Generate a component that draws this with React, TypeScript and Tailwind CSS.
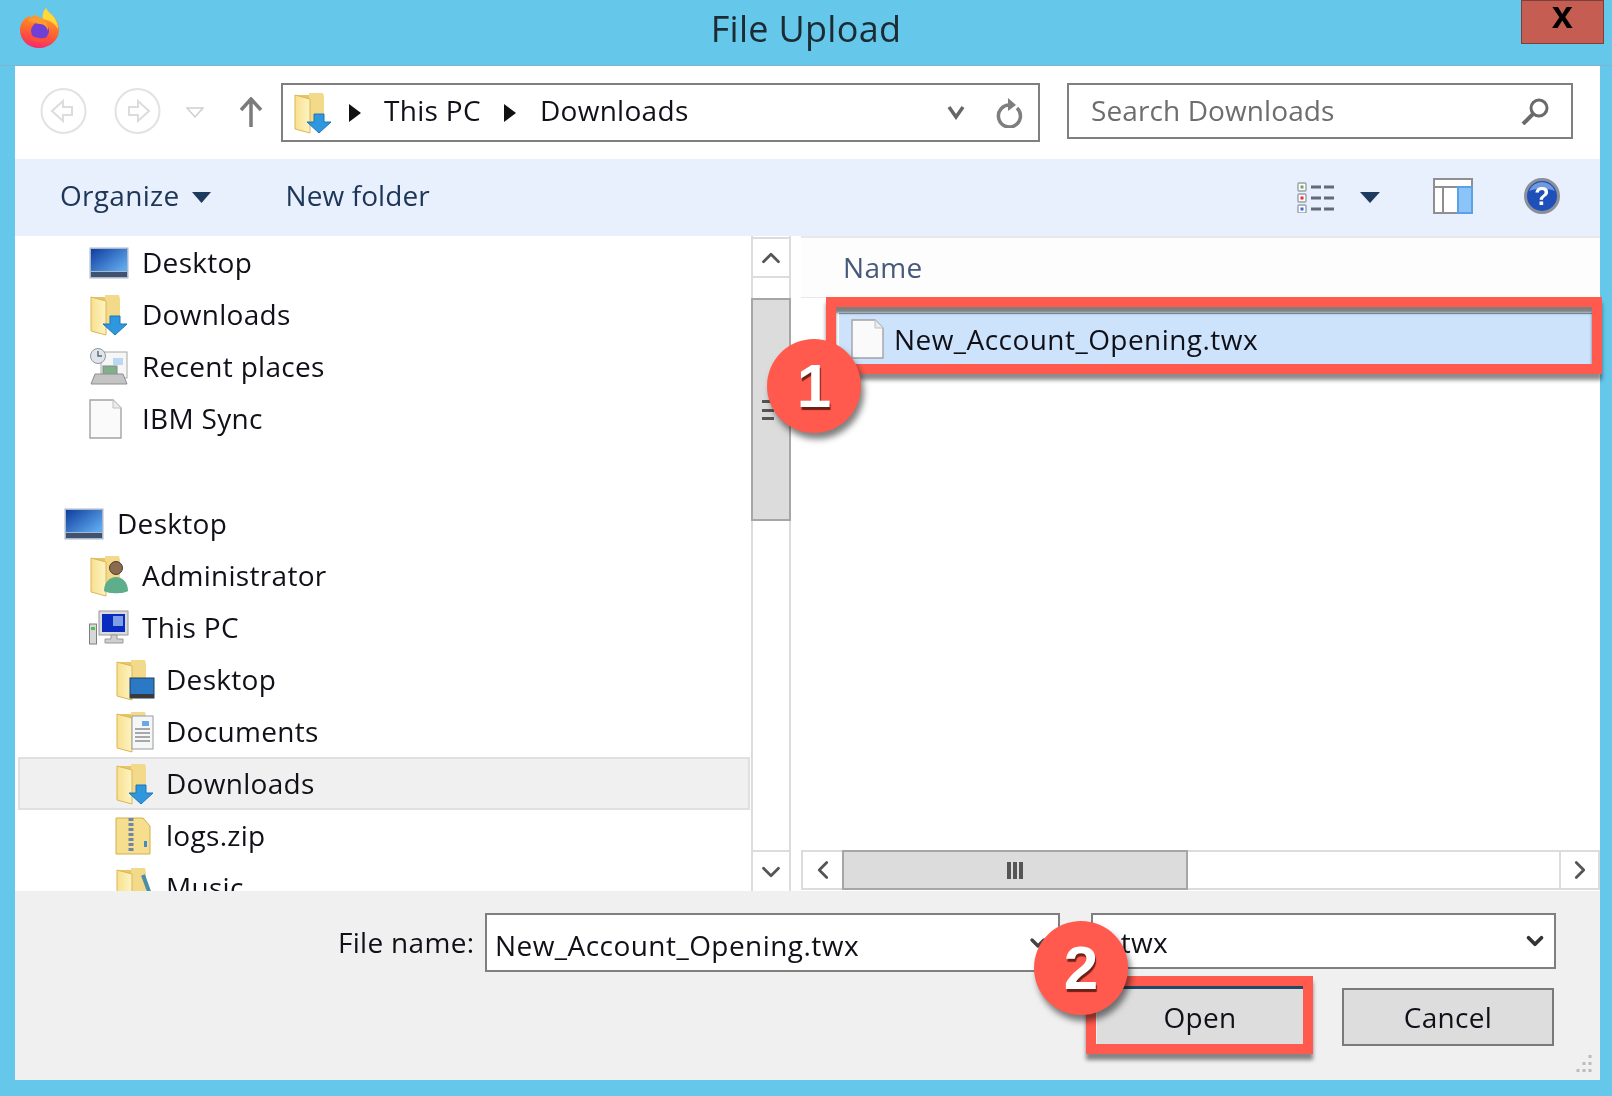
import { ChevronDown, ChevronLeft, ChevronRight, ChevronUp } from 'lucide-react';
import type { ReactNode } from 'react';

function Firefox() {
  return (
    <svg width="41" height="41" viewBox="0 0 41 41">
      <defs>
        <linearGradient id="ffBody" x1="0.6" y1="0" x2="0.4" y2="1">
          <stop offset="0" stopColor="#ffb52e" />
          <stop offset="0.55" stopColor="#ff6a2b" />
          <stop offset="1" stopColor="#f5296b" />
        </linearGradient>
      </defs>
      <path d="M27 1c-3 3-4 7-3 11L16 8c-2 0-3 2-3 3-1-1-2-2-3-2C4 12 1 17 1 23c0 10 8 18 19 18s20-8 20-18c0-6-3-12-7-15-2-2-5-4-6-7z" fill="url(#ffBody)" />
      <path d="M27 1c-3 3-4 7-3 11 6 1 12 4 15 10 0-6-3-11-6-14-2-2-5-4-6-7z" fill="#ffd93c" />
      <circle cx="21" cy="24" r="9" fill="#6f3fd6" />
      <path d="M9 13c4-3 8-3 11-2 6 1 10 6 9 13-1-4-4-7-8-7-3 0-4-1-5-2-2 1-5 0-7-2z" fill="#ff9a2e" />
      <path d="M8 24c1 7 6 11 13 11 5 0 9-3 11-7-3 2-7 4-12 3-6-1-10-3-12-7z" fill="#ff4f38" />
    </svg>
  );
}

function Folder({ children }: { children?: ReactNode }) {
  return (
    <svg width="40" height="42" viewBox="0 0 40 42">
      <defs>
        <linearGradient id="folderFill" x1="0" y1="0" x2="1" y2="0">
          <stop offset="0" stopColor="#f8e08e" />
          <stop offset="1" stopColor="#fdf3c4" />
        </linearGradient>
      </defs>
      <path d="M2 3h28v30H2z" fill="#e9c565" />
      <path d="M16 1h14l1 4v28H16z" fill="#f3d98a" />
      <path d="M2 3l15 4v34L2 37z" fill="url(#folderFill)" stroke="#dcb654" strokeWidth="1" />
      {children}
    </svg>
  );
}

function DownArrow() {
  return <path d="M21 22h10v8h7L26 41 14 30h7z" fill="#2f97dd" stroke="#1f74b8" strokeWidth="1" />;
}

function DownloadsIcon() {
  return (
    <Folder>
      <DownArrow />
    </Folder>
  );
}

function DesktopIcon() {
  return (
    <svg width="40" height="32" viewBox="0 0 40 32">
      <defs>
        <linearGradient id="deskFill" x1="0" y1="0" x2="1" y2="0.8">
          <stop offset="0" stopColor="#103d9e" />
          <stop offset="1" stopColor="#5ea9ee" />
        </linearGradient>
      </defs>
      <rect x="0.5" y="0.5" width="39" height="31" fill="#a9b8cb" />
      <rect x="2" y="2" width="36" height="22" fill="url(#deskFill)" />
      <rect x="2" y="25" width="36" height="5" fill="#3f5270" />
    </svg>
  );
}

function RecentIcon() {
  return (
    <svg width="40" height="38" viewBox="0 0 40 38">
      <rect x="12" y="4" width="26" height="26" fill="#f6f6f6" stroke="#a8a8a8" />
      <rect x="24" y="10" width="10" height="7" fill="#bcd7f2" />
      <rect x="14" y="18" width="14" height="9" fill="#7fb08a" stroke="#888" />
      <path d="M6 26h28l4 10H2z" fill="#c4c4c4" stroke="#8e8e8e" />
      <circle cx="9" cy="8" r="7.5" fill="#dfe5ea" stroke="#8b97a2" />
      <path d="M9 3v5h4" fill="none" stroke="#5c6770" strokeWidth="1.4" />
    </svg>
  );
}

function FileIcon() {
  return (
    <svg width="33" height="40" viewBox="0 0 33 40">
      <path d="M1 1h23l8 8v30H1z" fill="#fafafa" stroke="#a3a3a3" strokeWidth="1.4" />
      <path d="M24 1v8h8" fill="#ececec" stroke="#c0c0c0" />
    </svg>
  );
}

function AdminIcon() {
  return (
    <Folder>
      <circle cx="27" cy="13" r="6.5" fill="#8a6a50" stroke="#4c3a2d" />
      <path d="M15 36c0-9 6-14 12-14s12 5 12 14c-4 3-20 3-24 0z" fill="#5fae8b" />
    </Folder>
  );
}

function ThisPcIcon() {
  return (
    <svg width="40" height="36" viewBox="0 0 40 36">
      <rect x="0.5" y="14" width="7" height="20" fill="#d7d7d7" stroke="#7f7f7f" />
      <rect x="2" y="17" width="4" height="3" fill="#4bc24b" />
      <rect x="10" y="1" width="29" height="24" fill="#dadada" stroke="#9a9a9a" />
      <rect x="13" y="4" width="23" height="18" fill="#0a2bc0" />
      <rect x="24" y="6" width="10" height="10" fill="#7d9fe6" />
      <path d="M22 25h6v4h6v4H16v-4h6z" fill="#cfcfcf" stroke="#999" />
    </svg>
  );
}

function DesktopFolderIcon() {
  return (
    <Folder>
      <rect x="15" y="19" width="24" height="20" fill="#2b78c4" stroke="#23415f" />
      <rect x="15" y="35" width="24" height="4" fill="#3a3a3a" />
    </Folder>
  );
}

function DocumentsIcon() {
  return (
    <Folder>
      <rect x="17" y="5" width="21" height="33" fill="#f4f6f8" stroke="#9a9a9a" />
      <rect x="27" y="10" width="7" height="5" fill="#6ca7e8" />
      <path d="M20 18h15M20 22h15M20 26h15M20 30h15" stroke="#8d8d8d" strokeWidth="1.4" />
    </Folder>
  );
}

function ZipIcon() {
  return (
    <svg width="36" height="38" viewBox="0 0 36 38">
      <path d="M1 1h27l7 8v28H1z" fill="#f6de8f" stroke="#d4ad4c" />
      <path d="M16 1v34" stroke="#6f87a5" strokeWidth="5" strokeDasharray="3 2" />
      <rect x="29" y="24" width="3" height="6" fill="#3f8ec9" />
    </svg>
  );
}

function MusicIcon() {
  return (
    <Folder>
      <path d="M28 8l8 22" stroke="#4a8ea5" strokeWidth="4" fill="none" />
    </Folder>
  );
}

function TreeRow({ indent, slot, icon, label, selected }: { indent: string; slot: string; icon: ReactNode; label: string; selected?: boolean }) {
  return (
    <div className={`h-[52px] flex items-center ${indent}`}>
      <div className={`shrink-0 flex items-center ${slot}`}>{icon}</div>
      <span className="text-[28px] leading-none text-[#101018] whitespace-nowrap -translate-y-[1px]">{label}</span>
      {selected && (
        <div className="absolute left-[3px] right-0 -top-[1px] bottom-0 -z-10 bg-[#f0f0f0] border-2 border-[#e0e0e0]" />
      )}
    </div>
  );
}

function Tree() {
  const l0 = 'pl-[49px]';
  const l1 = 'pl-[74px]';
  const l2 = 'pl-[100px]';
  const s0 = 'w-[53px]';
  const s2 = 'w-[51px]';
  return (
    <div className="w-[735px] overflow-hidden pt-[1px]">
      <TreeRow indent={l1} slot={s0} icon={<DesktopIcon />} label="Desktop" />
      <TreeRow indent={l1} slot={s0} icon={<DownloadsIcon />} label="Downloads" />
      <TreeRow indent={l1} slot={s0} icon={<RecentIcon />} label="Recent places" />
      <TreeRow indent={l1} slot={s0} icon={<FileIcon />} label="IBM Sync" />
      <div className="h-[53px]" />
      <TreeRow indent={l0} slot={s0} icon={<DesktopIcon />} label="Desktop" />
      <TreeRow indent={l1} slot={s0} icon={<AdminIcon />} label="Administrator" />
      <TreeRow indent={l1} slot={s0} icon={<ThisPcIcon />} label="This PC" />
      <TreeRow indent={l2} slot={s2} icon={<DesktopFolderIcon />} label="Desktop" />
      <TreeRow indent={l2} slot={s2} icon={<DocumentsIcon />} label="Documents" />
      <div className="relative z-0">
        <TreeRow indent={l2} slot={s2} icon={<DownloadsIcon />} label="Downloads" selected />
      </div>
      <TreeRow indent={l2} slot={s2} icon={<ZipIcon />} label="logs.zip" />
      <TreeRow indent={l2} slot={s2} icon={<MusicIcon />} label="Music" />
    </div>
  );
}

function VerticalScrollbar() {
  return (
    <div className="w-[40px] shrink-0 ml-[1px] flex flex-col border-x-2 border-[#dcdcdc] pt-[1px]">
      <div className="h-[41px] flex items-center justify-center border-y-2 border-[#dcdcdc]">
        <ChevronUp size={30} strokeWidth={2.2} className="text-[#555]" />
      </div>
      <div className="h-[20px]" />
      <div className="h-[223px] -mx-[2px] bg-[#dcdcdc] border-2 border-[#a6a6a6]" />
      <div className="flex-1" />
      <div className="h-[41px] flex items-center justify-center border-t-2 border-[#dcdcdc]">
        <ChevronDown size={30} strokeWidth={2.2} className="text-[#555]" />
      </div>
    </div>
  );
}

function HorizontalScrollbar() {
  return (
    <div className="h-[40px] mb-[1px] flex border-y-2 border-[#dcdcdc]">
      <div className="w-[41px] border-l-2 border-[#dcdcdc] flex items-center justify-center">
        <ChevronLeft size={30} strokeWidth={2.2} className="text-[#555]" />
      </div>
      <div className="w-[346px] -my-[2px] bg-[#dcdcdc] border-2 border-[#a6a6a6] flex items-center justify-center gap-[2px]">
        <div className="w-[4px] h-[17px] bg-[#555]" />
        <div className="w-[4px] h-[17px] bg-[#555]" />
        <div className="w-[4px] h-[17px] bg-[#555]" />
      </div>
      <div className="flex-1" />
      <div className="w-[41px] border-x-2 border-[#dcdcdc] flex items-center justify-center">
        <ChevronRight size={30} strokeWidth={2.2} className="text-[#555]" />
      </div>
    </div>
  );
}

function NavBar() {
  return (
    <div className="h-[93px] bg-white flex items-start pt-[17px] pl-[25px]">
      <svg width="47" height="46" viewBox="0 0 47 46" className="mt-[5px]">
        <circle cx="23.5" cy="23" r="22" fill="#fff" stroke="#e2e2e2" strokeWidth="2" />
        <path d="M32 19v8h-9v6L12 23l11-10v6z" fill="#fff" stroke="#dcdcdc" strokeWidth="2" />
      </svg>
      <svg width="47" height="46" viewBox="0 0 47 46" className="mt-[5px] ml-[27px]">
        <circle cx="23.5" cy="23" r="22" fill="#fff" stroke="#e2e2e2" strokeWidth="2" />
        <path d="M15 19v8h9v6l11-10-11-10v6z" fill="#fff" stroke="#dcdcdc" strokeWidth="2" />
      </svg>
      <svg width="18" height="11" viewBox="0 0 18 11" className="mt-[24px] ml-[25px]">
        <path d="M1 1h16L9 10z" fill="#fff" stroke="#cfcfcf" strokeWidth="1.5" />
      </svg>
      <svg width="24" height="31" viewBox="0 0 24 31" className="mt-[14px] ml-[35px]">
        <path d="M12 30V3M2 13L12 2l10 11" fill="none" stroke="#7b7b7b" strokeWidth="3.5" />
      </svg>
      <div className="w-[759px] h-[59px] ml-[18px] border-2 border-[#7f7f7f] bg-white flex items-center pl-[10px] relative">
        <DownloadsIcon />
        <svg width="12" height="18" viewBox="0 0 12 18" className="ml-[16px]">
          <path d="M0 0l12 9-12 9z" fill="#111" />
        </svg>
        <span className="ml-[23px] text-[28px] leading-none text-[#101018] -translate-y-[3px]">This PC</span>
        <svg width="12" height="18" viewBox="0 0 12 18" className="ml-[23px]">
          <path d="M0 0l12 9-12 9z" fill="#111" />
        </svg>
        <span className="ml-[24px] text-[28px] leading-none text-[#101018] -translate-y-[3px]">Downloads</span>
        <svg width="18" height="15" viewBox="0 0 18 15" className="ml-auto">
          <path d="M2 2l7 10 7-10" fill="none" stroke="#666" strokeWidth="3.5" />
        </svg>
        <svg width="28" height="30" viewBox="0 0 28 30" className="ml-[30px] mr-[15px]">
          <path d="M22 10a11 11 0 1 1-7-3" fill="none" stroke="#7e7e7e" strokeWidth="3.5" />
          <path d="M13 0v13l8-6z" fill="#7e7e7e" />
        </svg>
      </div>
      <div className="w-[506px] h-[56px] ml-[27px] border-2 border-[#7f7f7f] bg-white flex items-center pl-[22px] pr-[22px]">
        <span className="text-[28px] leading-none text-[#6d6d6d] -translate-y-[1px] tracking-[0.1px]">Search Downloads</span>
        <svg width="28" height="27" viewBox="0 0 28 27" className="ml-auto">
          <circle cx="18" cy="10" r="8" fill="none" stroke="#6a6a6a" strokeWidth="3" />
          <path d="M12 16L2 26" stroke="#6a6a6a" strokeWidth="4" />
        </svg>
      </div>
    </div>
  );
}

function ToolBar() {
  return (
    <div className="h-[77px] bg-[#e8effd] flex items-center pl-[45px]">
      <span className="text-[28px] leading-none text-[#1d3557] -translate-y-[3px]">Organize</span>
      <svg width="19" height="11" viewBox="0 0 19 11" className="ml-[13px]">
        <path d="M0 0h19L9.5 11z" fill="#1d3a5f" />
      </svg>
      <span className="ml-[74px] text-[28px] leading-none text-[#1d3557] -translate-y-[3px] tracking-[0.1px]">New folder</span>
      <svg width="37" height="31" viewBox="0 0 37 31" className="ml-auto">
        <g fill="#fff" stroke="#9aa0a8" strokeWidth="1.4">
          <rect x="1" y="1" width="8" height="8" rx="1" />
          <rect x="1" y="12" width="8" height="8" rx="1" />
          <rect x="1" y="23" width="8" height="8" rx="1" />
        </g>
        <rect x="3.5" y="3.5" width="3" height="3" fill="#5ab05a" />
        <rect x="3.5" y="14.5" width="3" height="3" fill="#e03030" />
        <rect x="3.5" y="25.5" width="3" height="3" fill="#3070d0" />
        <path d="M14 5h23M14 16h23M14 27h23" stroke="#5f6b7a" strokeWidth="3" strokeDasharray="10 3" />
      </svg>
      <svg width="20" height="11" viewBox="0 0 20 11" className="ml-[26px]">
        <path d="M0 0h20L10 11z" fill="#1d3a5f" />
      </svg>
      <svg width="40" height="36" viewBox="0 0 40 36" className="ml-[53px] -translate-y-[2px]">
        <rect x="1" y="1" width="38" height="34" fill="#fff" stroke="#8f8f8f" strokeWidth="2" />
        <path d="M2 9h36M10 9v26" stroke="#8f8f8f" strokeWidth="2" />
        <rect x="25" y="9" width="14" height="26" fill="#8cc4f8" stroke="#5aa2e8" strokeWidth="2" />
      </svg>
      <svg width="36" height="36" viewBox="0 0 36 36" className="ml-[51px] mr-[40px] -translate-y-[2px]">
        <circle cx="18" cy="18" r="16.5" fill="#1f4fb8" stroke="#8a8f98" strokeWidth="3" />
        <path d="M18 4a14 14 0 0 1 13 9c-7-3-18-3-26 0a14 14 0 0 1 13-9z" fill="#6f9ae0" />
        <text x="18" y="27" textAnchor="middle" fontSize="25" fontWeight="700" fill="#fff" fontFamily="Liberation Sans, sans-serif">?</text>
      </svg>
    </div>
  );
}

function FilePane() {
  return (
    <div className="flex-1 ml-[10px] flex flex-col min-w-0">
      <div className="h-[62px] bg-[#fdfdfd] border-t-2 border-[#e6e8ec] border-b border-b-[#e8e8e8] flex items-center pl-[42px]">
        <span className="text-[28px] leading-none text-[#46597a] -translate-y-[1px]">Name</span>
      </div>
      <div className="flex-1 pt-[15px] pl-[38px] pr-[7px]">
        <div className="h-[51px] bg-[#cde3fb] flex items-center pl-[12px] border-t border-[#7ea3cc]">
          <FileIcon />
          <span className="ml-[10px] text-[28px] leading-none text-[#101018] tracking-[0.45px]">New_Account_Opening.twx</span>
        </div>
      </div>
      <HorizontalScrollbar />
    </div>
  );
}

function Footer() {
  return (
    <div className="h-[189px] bg-[#f0f0f0] flex flex-col pt-[22px] relative">
      <div className="flex items-start pl-[323px]">
        <span className="w-[147px] text-[28px] leading-none text-[#101018] pt-[15px]">File name:</span>
        <div className="w-[575px] h-[59px] border-2 border-[#7f7f7f] bg-white flex items-center pl-[8px]">
          <span className="text-[28px] leading-none text-[#101018] translate-y-[2px] tracking-[0.45px]">New_Account_Opening.twx</span>
          <ChevronDown size={24} strokeWidth={3.4} className="ml-auto mr-[8px] text-[#444]" />
        </div>
        <div className="w-[465px] h-[56px] ml-[31px] border-2 border-[#7f7f7f] bg-white flex items-center pl-[20px]">
          <span className="text-[28px] leading-none text-[#101018] translate-y-[1px]">.twx</span>
          <ChevronDown size={26} strokeWidth={3.4} className="ml-auto mr-[6px] text-[#333]" />
        </div>
      </div>
      <div className="flex justify-end pr-[46px] mt-[16px]">
        <div className="w-[206px] h-[58px] bg-[#dddddd] flex items-center justify-center text-[28px] leading-none text-[#101018]">Open</div>
        <div className="w-[212px] h-[58px] ml-[39px] bg-[#dddddd] border-2 border-[#7a7a7a] flex items-center justify-center text-[28px] leading-none text-[#101018]">Cancel</div>
      </div>
      <svg width="22" height="22" viewBox="0 0 22 22" className="absolute right-[6px] bottom-[4px]">
        <path d="M18 1v3M12 8v3M18 8v3M6 15v3M12 15v3M18 15v3" stroke="#bbb" strokeWidth="3" />
      </svg>
    </div>
  );
}

function Badge({ className, n }: { className: string; n: string }) {
  return (
    <div className={`absolute w-[94px] h-[94px] rounded-full bg-[#ff5a4d] shadow-[3px_6px_6px_rgba(0,0,0,0.5)] flex items-center justify-center text-[62px] leading-none font-bold tracking-normal text-white font-['Liberation_Sans',sans-serif] [text-shadow:1px_3px_1px_#6e1f18] ${className}`}>
      {n}
    </div>
  );
}

export default function App() {
  return (
    <div className="w-[1612px] h-[1096px] relative overflow-hidden bg-[#65c8ea] font-['Open_Sans',sans-serif] tracking-[0.3px] pl-[15px] pr-[12px] flex flex-col blur-[0.6px]">
      <div className="h-[66px] -ml-[15px] -mr-[12px] grid grid-cols-[1fr_auto_1fr] border-b border-[#7fb6cf]">
        <div className="pl-[19px] pt-[7px]">
          <Firefox />
        </div>
        <div className="text-[36px] leading-[58px] text-[#1c2a33]">File Upload</div>
        <div className="justify-self-end mr-[8px] w-[83px] h-[44px] bg-[#c65d52] border border-[#7d3f3a] flex items-start justify-center text-[38px] leading-[28px] font-bold text-black font-['Liberation_Sans',sans-serif]">
          x
        </div>
      </div>
      <NavBar />
      <ToolBar />
      <div className="h-[655px] flex bg-white">
        <Tree />
        <VerticalScrollbar />
        <FilePane />
      </div>
      <Footer />

      <div className="absolute left-[826px] top-[297px] w-[776px] h-[77px] border-[10px] border-[#ff5a4d] shadow-[0_6px_4px_rgba(0,0,0,0.45),inset_0_6px_3px_rgba(0,0,0,0.5)]" />
      <div className="absolute left-[1086px] top-[976px] w-[227px] h-[78px] border-[10px] border-[#ff5a4d] shadow-[0_6px_4px_rgba(0,0,0,0.45),inset_0_3px_0_#1f4a63]" />
      <div className="absolute left-[762px] top-[400px] w-[12px] h-[20px] flex flex-col justify-between">
        <div className="h-[3px] bg-[#555]" />
        <div className="h-[3px] bg-[#555]" />
        <div className="h-[3px] bg-[#555]" />
      </div>
      <Badge className="left-[767px] top-[339px]" n="1" />
      <Badge className="left-[1034px] top-[921px]" n="2" />
    </div>
  );
}
